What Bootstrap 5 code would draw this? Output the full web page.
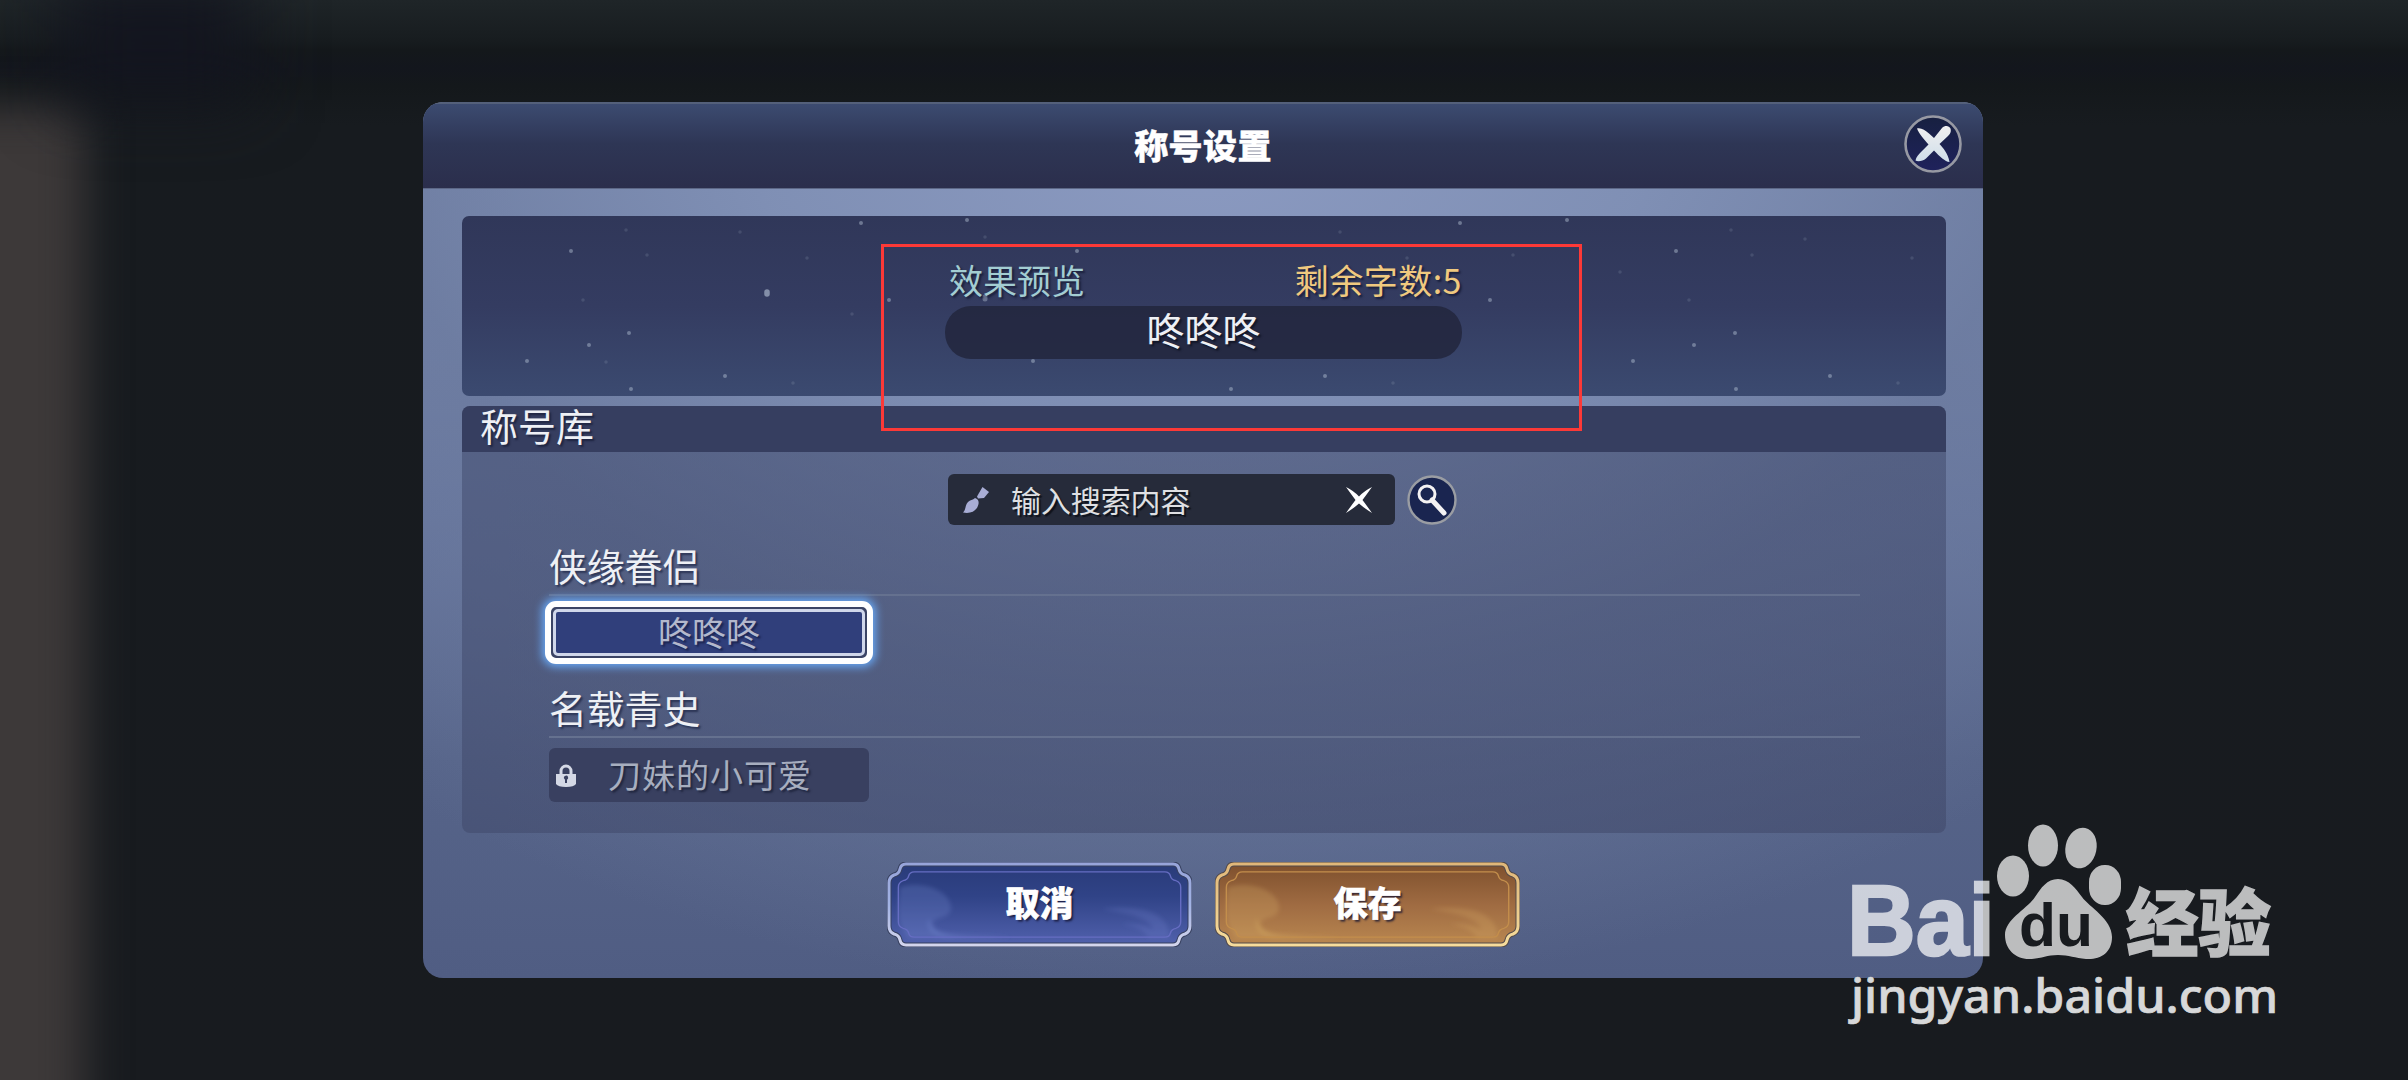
<!DOCTYPE html>
<html lang="zh-CN">
<head>
<meta charset="utf-8">
<title>称号设置</title>
<link href="https://cdn.jsdelivr.net/npm/bootstrap@5.3.0/dist/css/bootstrap.min.css" rel="stylesheet">
<style>
body{width:2408px;height:1080px;background:linear-gradient(180deg,#1f2528 0,#181d20 38px,#14181b 50px,#13161d 68px,#14181b 86px,#171b1f 125px,#181b1f 100%);font-family:"Noto Sans CJK SC","Noto Sans",sans-serif;color:#eef0f5}
.edge-glow{position:absolute;left:0;top:0;width:400px;height:1080px;overflow:hidden}
.edge-glow::before{content:"";position:absolute;left:-120px;top:108px;width:204px;height:1150px;background:#3d3939;filter:blur(22px)}
.edge-glow::after{content:"";position:absolute;left:60px;top:-20px;width:190px;height:120px;background:#13151f;filter:blur(34px)}
.dialog-box{width:1560px;height:876px;margin:102px 0 0 423px;border-radius:20px;overflow:hidden;position:relative;border:0;background:radial-gradient(ellipse 1250px 860px at 50% 4%,#8b9ac1 0,rgba(128,144,181,.9) 35%,rgba(108,123,159,.75) 65%,rgba(83,96,134,0) 100%),linear-gradient(#7c8cb2 10%,#66759d 45%,#566489 75%,#505d83)}
.dialog-head{height:87px;background:linear-gradient(#3c4b70 0,#343f61 22px,#2e3655 40px,#2b2e4c 100%);border-top:2px solid #54607a;border-bottom:1px solid #5d6887;position:relative}
.dialog-title{font-size:34px;font-weight:900;line-height:1;letter-spacing:.4px;color:#fff;padding-bottom:3px;-webkit-text-stroke:.5px #fff}
.close-btn{position:absolute;right:20px;top:10px;width:60px;height:60px}
.dialog-main{padding:27px 37px 0 39px}
.preview-panel{height:180px;border-radius:7px;background:linear-gradient(#303759,#343c61 50%,#3b4a70);position:relative;overflow:hidden;padding-top:46px}
.star-field{position:absolute;left:0;top:0}
.preview-area{width:517px;margin-left:483px;position:relative}
.label-row{height:40px;font-size:34px;line-height:35px;padding-left:4px;text-shadow:2px 2px 2px rgba(15,20,45,.7)}
.tone-mint{color:#a3cdd2}.tone-gold{color:#f0c97f;letter-spacing:.5px}
.name-pill{height:53px;margin-top:4px;padding-bottom:8px;border-radius:26px;background:rgba(34,38,61,.85);font-size:38px;line-height:1;text-shadow:2px 2px 2px #111526}
.library{height:427px;margin-top:10px;border-radius:8px;background:linear-gradient(170deg,rgba(63,73,108,.5),rgba(63,71,104,.55))}
.library-head{height:46px;border-radius:8px 8px 0 0;background:#363e60;font-size:38px;line-height:38px;padding-left:18px;text-shadow:2px 2px 2px #1e2440}
.library-body{padding:22px 86px 0 87px}
.search-row{margin-left:399px;gap:12px}
.search-box{width:447px;height:51px;border-radius:6px;background:#262b3a;padding:0 22px 0 14px;font-size:30px;line-height:1;color:#dfe0e3}
.search-text{margin-left:21px;padding-bottom:2px;letter-spacing:-.1px;text-shadow:2px 2px 1px #10131c}
.group-title{height:55px;border-bottom:2px solid #65718f;font-size:38px;line-height:48px;letter-spacing:-.2px;text-shadow:2px 2px 2px #2b3454}
.title-second{margin-top:19px}
.picked{width:328px;height:63px;margin:5px 0 0 -4px;border:6px solid #fff;border-radius:11px;background:#3b4465;padding:2px;box-shadow:0 0 8px 3px #68a8f5}
.picked-inner{height:100%;border:3px solid #d0d7ea;border-radius:5px;background:#303f7b;font-size:34px;line-height:1;padding-bottom:2px;color:#b3b8cc;text-shadow:2px 2px 2px #1b2450}
.locked{width:320px;height:54px;margin-top:10px;border-radius:6px;background:#394060;padding-left:7px;font-size:33px;line-height:1;color:#a7aebf;text-shadow:2px 2px 2px #20263f}
.locked span{margin-left:32px;padding-bottom:2px;letter-spacing:1px}
.action-row{margin-top:29px;gap:23px;padding-right:1px}
.plate{width:305px;height:85px;border:0;background:none;padding:0 0 5px;position:relative;color:#fff;font-size:34px;font-weight:900;line-height:1}
.plate svg{position:absolute;left:0;top:0}
.plate span{position:relative;text-shadow:2px 2px 2px rgba(20,20,50,.8);-webkit-text-stroke:.7px #fff}
.callout-frame{position:absolute;left:881px;top:244px;width:701px;height:187px;border:3px solid #fc3937}
.site-mark{position:absolute;left:1820px;top:810px}
</style>
<script src="https://cdn.jsdelivr.net/npm/bootstrap@5.3.0/dist/js/bootstrap.bundle.min.js"></script>
</head>
<body class="overflow-hidden d-flex align-items-start m-0 position-relative">
<div class="edge-glow"></div>
<main class="card dialog-box text-reset">
  <header class="dialog-head d-flex justify-content-center align-items-center">
    <span class="dialog-title">称号设置</span>
    <svg class="close-btn" viewBox="0 0 60 60" role="button" aria-label="关闭">
      <defs><linearGradient id="gc" x2="0" y2="1"><stop stop-color="#172040"/><stop offset="1" stop-color="#1f225c"/></linearGradient>
      <linearGradient id="gx" x2="0" y2="1"><stop stop-color="#f0eff0"/><stop offset="1" stop-color="#cfdeea"/></linearGradient></defs>
      <circle cx="30" cy="30" r="27.500" fill="url(#gc)" stroke="#9799a3" stroke-width="2.600"/>
      <path d="M14 14.500C18 13.500 22 16 26 19.500L31 24L39 14C42 11 46 11.500 47.500 14.500C48.500 18 47 20 45 22L36.500 30C40 34 45 39 46.500 48C42 47.500 37 43 31 36.500L23 44.500C20 47 15 48 12.500 46.500C13 43 16 40 18 38L25.500 30.500C21 25 16 20 14 14.500Z" fill="url(#gx)"/>
    </svg>
  </header>
  <div class="dialog-main">
    <section class="preview-panel">
      <svg class="star-field" width="1484" height="180" viewBox="462 216 1484 180" fill="none" stroke="#b9c6d8" stroke-linecap="round">
        <path stroke-width="4" opacity=".45" d="M571 251h0M861 223h0M967 220h0M889 300h0M629 333h0M589 345h0M527 361h0M725 376h0M631 389h0M1077 251h0M1033 361h0M1460 223h0M1567 220h0M1490 300h0M1325 376h0M1231 389h0M1676 251h0M1735 333h0M1694 345h0M1633 361h0M1830 376h0M1736 389h0"/>
        <path stroke-width="3.500" opacity=".15" d="M647 255h0M626 230h0M740 232h0M583 300h0M852 314h0M985 237h0M807 258h0M606 362h0M793 383h0M1340 232h0M1407 258h0M1752 255h0M1731 230h0M1805 239h0M1620 272h0M1689 300h0M1912 258h0M1393 383h0M1898 383h0M1513 255h0"/>
        <path stroke-width="5.500" opacity=".6" d="M767 292h0v2"/><path stroke-width="5" opacity=".4" d="M985 297h0v2"/>
      </svg>
      <div class="preview-area">
        <div class="label-row d-flex justify-content-between"><span class="tone-mint">效果预览</span><span class="tone-gold">剩余字数:5</span></div>
        <div class="name-pill d-flex justify-content-center align-items-center">咚咚咚</div>
      </div>
    </section>
    <section class="library">
      <div class="library-head">称号库</div>
      <div class="library-body">
        <div class="search-row d-flex align-items-center">
          <div class="search-box d-flex align-items-center">
            <svg width="28" height="28" viewBox="0 0 28 28" fill="#a8add5"><path d="M20.500 1L27 6L22 12L16 12.500L15 10.500Z"/><path d="M13 12C16 13 17 15 16.500 18C15 25 9 28 1 26.500C4 24 3 19 6 16C8 14 11 14 13 12Z"/></svg>
            <span class="search-text">输入搜索内容</span>
            <svg class="ms-auto" width="28" height="28" viewBox="0 0 28 28" fill="#fff"><path d="M1 1Q9 5 14 10.500Q19 5 27 1Q22 8 17.500 14Q22 20 27 27Q19 22 14 17.500Q9 22 1 27Q6 20 10.500 14Q6 8 1 1Z"/></svg>
          </div>
          <svg width="50" height="50" viewBox="0 0 50 50" role="button" aria-label="搜索"><circle cx="25" cy="25" r="23.500" fill="#1a2550" stroke="#9a9da3" stroke-width="2.400"/><circle cx="20" cy="19" r="8" fill="none" stroke="#f4f2f3" stroke-width="3"/><path d="M25 25L37 38" stroke="#f4f2f3" stroke-width="5" stroke-linecap="round"/></svg>
        </div>
        <div class="group-title mt-3">侠缘眷侣</div>
        <div class="picked"><div class="picked-inner d-flex justify-content-center align-items-center">咚咚咚</div></div>
        <div class="group-title title-second">名载青史</div>
        <div class="locked d-flex align-items-center">
          <svg width="20" height="23" viewBox="0 0 20 23"><path d="M5 10V7A5 5 0 0 1 15 7V10" fill="none" stroke="#d4d8e5" stroke-width="3"/><path d="M0 10H20V20Q18 23 10 23Q2 23 0 20Z" fill="#d4d8e5"/><path d="M7.800 14a2.200 2.200 0 1 1 3.200 1.800V19H9V15.800Z" fill="#394060"/></svg>
          <span>刀妹的小可爱</span>
        </div>
      </div>
    </section>
    <div class="action-row d-flex justify-content-center">
      <button class="plate"><svg width="305" height="85" viewBox="0 0 305 85">
        <defs><linearGradient id="gb" x2="0" y2="1"><stop stop-color="#293b79"/><stop offset=".4" stop-color="#304387"/><stop offset="1" stop-color="#5161ad"/></linearGradient>
        <linearGradient id="sb" x2="0" y2="1"><stop stop-color="#97a4da"/><stop offset=".5" stop-color="#a2b3e4"/><stop offset="1" stop-color="#d3d5ed"/></linearGradient>
        <linearGradient id="go" x2="0" y2="1"><stop stop-color="#7e502d"/><stop offset=".5" stop-color="#9f6b42"/><stop offset="1" stop-color="#b98750"/></linearGradient>
        <linearGradient id="so" x2="0" y2="1"><stop stop-color="#e0b779"/><stop offset="1" stop-color="#f6dc9c"/></linearGradient>
        <filter id="soft"><feGaussianBlur stdDeviation="2"/></filter>
        <path id="fr" d="M19 2H286Q291 2 292 7Q293 12 298 13Q303 15 303 21V64Q303 70 298 72Q293 73 292 78Q291 83 286 83H19Q14 83 13 78Q12 73 7 72Q2 70 2 64V21Q2 15 7 13Q12 12 13 7Q14 2 19 2Z"/>
        <path id="w1" d="M13 25C38 18 65 30 64 47C62 59 44 53 46 64C50 77 80 75 111 76H22C9 66 11 43 13 25Z"/>
        <path id="w2" d="M42 56C46 77 75 71 126 76H60C42 75 38 63 42 56Z"/>
        <path id="w3" d="M215 47C258 42 284 53 282 76H265C272 62 256 53 215 47ZM235 62C255 61 270 66 272 76H262Q257 66 235 62Z"/>
        </defs>
        <use href="#fr" fill="url(#gb)" stroke="#37405f" stroke-width="5"/><g fill="#7b8ed7" filter="url(#soft)"><use href="#w1" opacity=".24"/><use href="#w2" opacity=".25"/><use href="#w3" opacity=".2"/></g><use href="#fr" fill="none" stroke="url(#sb)" stroke-width="3"/><use href="#fr" fill="none" stroke="#666dc2" stroke-width="1.500" transform="translate(9.500 8.200) scale(.938 .807)"/>
      </svg><span>取消</span></button>
      <button class="plate"><svg width="305" height="85" viewBox="0 0 305 85"><use href="#fr" fill="url(#go)" stroke="#524a4b" stroke-width="5"/><g fill="#ddb368" filter="url(#soft)"><use href="#w1" opacity=".24"/><use href="#w2" opacity=".25"/><use href="#w3" opacity=".22"/></g><use href="#fr" fill="none" stroke="url(#so)" stroke-width="3"/><use href="#fr" fill="none" stroke="#c38e4c" stroke-width="1.500" transform="translate(9.500 8.200) scale(.938 .807)"/></svg><span>保存</span></button>
    </div>
  </div>
</main>
<div class="callout-frame"></div>
<svg class="site-mark" width="480" height="230" viewBox="0 0 480 230">
  <g fill="#fff" opacity=".71">
    <text x="27" y="145" font-family="Liberation Sans" font-weight="700" font-size="100" stroke="#fff" stroke-width="2.500" textLength="148" lengthAdjust="spacingAndGlyphs">Bai</text>
    <ellipse cx="193" cy="66" rx="16" ry="20.500"/><ellipse cx="223" cy="35.500" rx="15" ry="21"/><ellipse cx="261" cy="38" rx="15.500" ry="20.500" transform="rotate(12 261 38)"/><rect x="269" y="55" width="32" height="40" rx="15.500" ry="17"/>
    <path d="M238 69C249 69 256 79 262 87C269 97 292 109 292 127C292 143 280 150 266 149C255 148 249 145 238 145C226 145 221 149 209 149C195 149 185 139 185 125C185 109 207 99 215 87C221 78 227 69 238 69Z"/>
    <text x="306" y="140" font-family="Noto Sans CJK SC" font-weight="900" font-size="73" stroke="#fff" stroke-width="1.500" textLength="145" lengthAdjust="spacingAndGlyphs">经验</text>
  </g>
  <text x="199" y="136" font-family="Liberation Sans" font-weight="700" font-size="62" fill="#181b1f" textLength="74" lengthAdjust="spacingAndGlyphs">du</text>
  <text x="31" y="203" font-family="Noto Sans" font-weight="500" font-size="47" fill="#d7d8d9" stroke="#d7d8d9" stroke-width=".7" textLength="427" lengthAdjust="spacingAndGlyphs">jingyan.baidu.com</text>
</svg>
</body>
</html>
